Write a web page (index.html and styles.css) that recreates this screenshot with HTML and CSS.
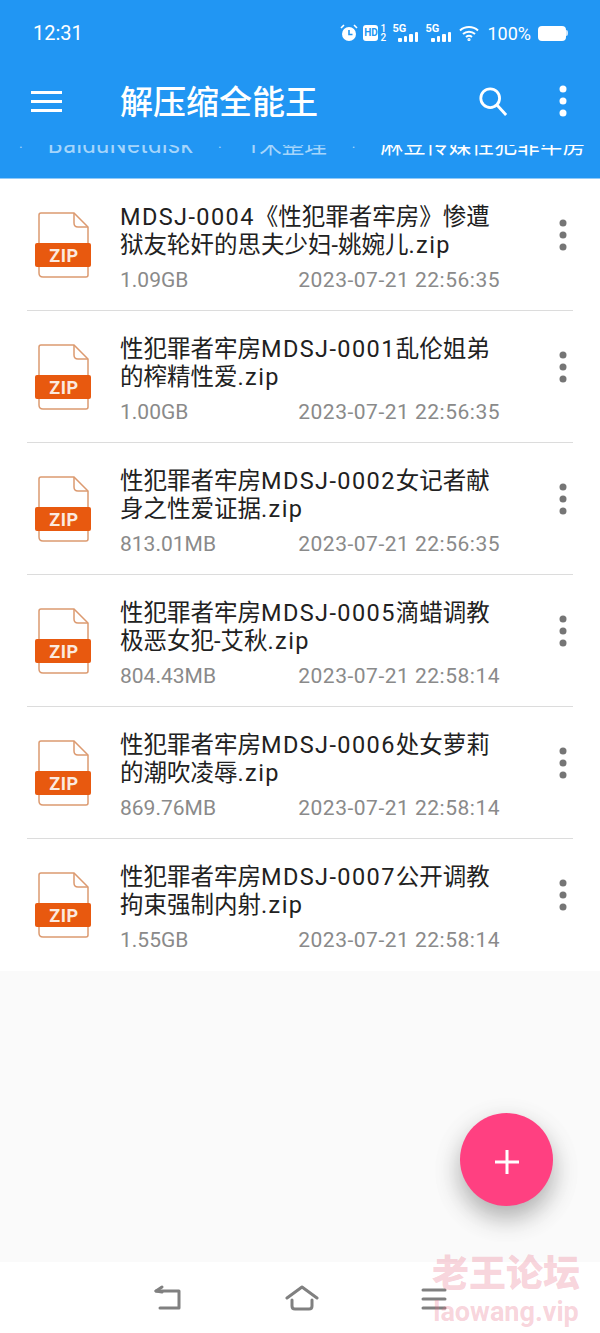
FILE: index.html
```html
<!DOCTYPE html>
<html lang="zh-CN">
<head>
    <meta charset="UTF-8">
    <meta name="viewport" content="width=device-width, initial-scale=1.0">
    <title>解压缩全能王</title>
    <link rel="stylesheet" href="styles.css">
</head>
<body>
    <svg class="defs" width="0" height="0">
        <symbol id="zip" viewBox="0 0 60 68">
            <path d="M5 32V4q0-2 2-2h33l14 14v16M54 56v8q0 2-2 2H9q-4 0-4-4v-6" fill="none" stroke="#dc9a70" stroke-width="1.5"/>
            <path d="M40 2v10q0 4 4 4h10" fill="none" stroke="#dc9a70" stroke-width="1.5"/>
            <rect x="1" y="32" width="56" height="24" rx="2" fill="#e8590f"/>
        </symbol>
        <symbol id="dots" viewBox="0 0 8 32">
            <circle cx="4" cy="4" r="3.500"/><circle cx="4" cy="16" r="3.500"/><circle cx="4" cy="28" r="3.500"/>
        </symbol>
    </svg>

    <div class="app">
        <header class="topbar">
            <div class="status">
                <span class="clock">12:31</span>
                <div class="status-icons">
                    <svg class="alarm" width="18" height="18" viewBox="0 0 18 18" fill="#fff"><circle cx="9" cy="10" r="7"/><path d="M1 4l3-3M17 4l-3-3" stroke="#fff" stroke-width="1.6"/><path d="M9 6v4.500h3.500" stroke="#2196f3" stroke-width="1.600" fill="none"/></svg>
                    <div class="hd"><span class="hd-box">HD</span><span class="hd-nums"><b>1</b><b>2</b></span></div>
                    <div class="sig"><span>5G</span><i class="b1"></i><i class="b2"></i><i class="b3"></i><i class="b4"></i></div>
                    <div class="sig"><span>5G</span><i class="b1"></i><i class="b2"></i><i class="b3"></i><i class="b4"></i></div>
                    <svg class="wifi" width="20" height="16" viewBox="0 0 20 16" fill="none" stroke="#fff" stroke-width="2"><path d="M1 5.500c5-4.600 13-4.600 18 0M4 9c3.300-3 8.700-3 12 0M7 12c1.700-1.400 4.300-1.400 6 0"/><circle cx="10" cy="14.500" r=".6"/></svg>
                    <span class="pct">100%</span>
                    <div class="battery"></div>
                </div>
            </div>
            <div class="toolbar">
                <div class="burger"><i></i><i></i><i></i></div>
                <h1>解压缩全能王</h1>
                <svg class="search" width="30" height="30" viewBox="0 0 32 32" fill="none" stroke="#fff" stroke-width="3"><circle cx="13" cy="13" r="10"/><path d="M20 20l10 11"/></svg>
                <svg class="more-top" width="8" height="32" fill="#fff"><use href="#dots"/></svg>
            </div>
            <div class="crumbs">
                <div class="crumbs-row">
                    <span class="sep">·</span><span class="crumb-latin">BaiduNetdisk</span>
                    <span class="sep">·</span><span>1未整理</span>
                    <span class="sep">·</span><span class="current">麻豆传媒性犯罪牢房</span>
                </div>
            </div>
        </header>

        <ul class="files">
            <li class="file">
                <div class="zip"><svg width="60" height="68"><use href="#zip"/></svg><span>ZIP</span></div>
                <div class="info">
                    <div class="name"><span class="latin">MDSJ-0004</span>《性犯罪者牢房》惨遭狱友轮奸的思夫少妇-姚婉儿<span class="latin">.zip</span></div>
                    <div class="meta"><span>1.09GB</span><span class="date">2023-07-21 22:56:35</span></div>
                </div>
                <svg class="more" width="8" height="32" fill="#757575"><use href="#dots"/></svg>
            </li>
            <li class="file">
                <div class="zip"><svg width="60" height="68"><use href="#zip"/></svg><span>ZIP</span></div>
                <div class="info">
                    <div class="name">性犯罪者牢房<span class="latin">MDSJ-0001</span>乱伦姐弟的榨精性爱<span class="latin">.zip</span></div>
                    <div class="meta"><span>1.00GB</span><span class="date">2023-07-21 22:56:35</span></div>
                </div>
                <svg class="more" width="8" height="32" fill="#757575"><use href="#dots"/></svg>
            </li>
            <li class="file">
                <div class="zip"><svg width="60" height="68"><use href="#zip"/></svg><span>ZIP</span></div>
                <div class="info">
                    <div class="name">性犯罪者牢房<span class="latin">MDSJ-0002</span>女记者献身之性爱证据<span class="latin">.zip</span></div>
                    <div class="meta"><span>813.01MB</span><span class="date">2023-07-21 22:56:35</span></div>
                </div>
                <svg class="more" width="8" height="32" fill="#757575"><use href="#dots"/></svg>
            </li>
            <li class="file">
                <div class="zip"><svg width="60" height="68"><use href="#zip"/></svg><span>ZIP</span></div>
                <div class="info">
                    <div class="name">性犯罪者牢房<span class="latin">MDSJ-0005</span>滴蜡调教极恶女犯-艾秋<span class="latin">.zip</span></div>
                    <div class="meta"><span>804.43MB</span><span class="date">2023-07-21 22:58:14</span></div>
                </div>
                <svg class="more" width="8" height="32" fill="#757575"><use href="#dots"/></svg>
            </li>
            <li class="file">
                <div class="zip"><svg width="60" height="68"><use href="#zip"/></svg><span>ZIP</span></div>
                <div class="info">
                    <div class="name">性犯罪者牢房<span class="latin">MDSJ-0006</span>处女萝莉的潮吹凌辱<span class="latin">.zip</span></div>
                    <div class="meta"><span>869.76MB</span><span class="date">2023-07-21 22:58:14</span></div>
                </div>
                <svg class="more" width="8" height="32" fill="#757575"><use href="#dots"/></svg>
            </li>
            <li class="file">
                <div class="zip"><svg width="60" height="68"><use href="#zip"/></svg><span>ZIP</span></div>
                <div class="info">
                    <div class="name">性犯罪者牢房<span class="latin">MDSJ-0007</span>公开调教拘束强制内射<span class="latin">.zip</span></div>
                    <div class="meta"><span>1.55GB</span><span class="date">2023-07-21 22:58:14</span></div>
                </div>
                <svg class="more" width="8" height="32" fill="#757575"><use href="#dots"/></svg>
            </li>
        </ul>

        <nav class="navbar">
            <svg width="30" height="26" viewBox="0 0 30 26" fill="none" stroke="#808080" stroke-width="3" stroke-linecap="round" stroke-linejoin="round"><path d="M3 6h23v17H7"/><path d="M9 2L3 6l6 1"/></svg>
            <svg width="34" height="26" viewBox="0 0 34 26" fill="none" stroke="#808080" stroke-width="3" stroke-linecap="round" stroke-linejoin="round"><path d="M2 13L17 2l15 11"/><path d="M7 15v6q0 3 3 3h14q3 0 3-3v-6"/></svg>
            <svg width="26" height="24" viewBox="0 0 26 24" fill="none" stroke="#808080" stroke-width="3" stroke-linecap="round"><path d="M2 4h22M2 13h22M2 22h22"/></svg>
        </nav>

        <button class="fab"><svg width="26" height="26" viewBox="0 0 26 26" stroke="#fff" stroke-width="3"><path d="M1 13h24M13 1v24"/></svg></button>
        <div class="watermark"><strong>老王论坛</strong><span>laowang.vip</span></div>
    </div>
</body>
</html>
```

FILE: styles.css
```css
* { box-sizing: border-box; }
html, body { margin: 0; padding: 0; }
body {
    font-family: Roboto, "Noto Sans CJK SC", sans-serif;
    background-color: #fafafa;
}
.defs { position: absolute; }
.app {
    position: relative;
    width: 600px;
    height: 1333px;
    display: flex;
    flex-direction: column;
    overflow: hidden;
}

.topbar {
    background-color: #2196f3;
    color: white;
    height: 179px;
    border-bottom: 1px solid #90caf9;
}
.status {
    height: 66px;
    display: flex;
    align-items: center;
    justify-content: space-between;
    padding: 0 33px;
}
.clock { font-size: 20px; }
.status-icons {
    display: flex;
    align-items: center;
    gap: 6px;
    margin-right: 1px;
}
.alarm { margin-right: -1px; }
.hd { display: flex; align-items: center; gap: 1px; margin-right: -2px; }
.hd-box {
    background: white;
    color: #2196f3;
    font-size: 10px;
    font-weight: 700;
    line-height: 14px;
    width: 15px;
    height: 16px;
    padding-top: 1px;
    border-radius: 3px;
    text-align: center;
}
.hd-nums { display: flex; flex-direction: column; width: 8px; text-align: center; }
.hd-nums b { font-size: 10px; font-weight: 500; line-height: 9px; }
.sig {
    position: relative;
    width: 26px;
    height: 18px;
    margin-left: 1px;
    display: flex;
    align-items: flex-end;
    justify-content: flex-end;
    gap: 2px;
}
.sig span {
    position: absolute;
    left: 0;
    top: -1px;
    font-size: 11px;
    font-weight: 700;
    line-height: 11px;
}
.sig i { width: 3.5px; background: white; border-radius: 1px; }
.sig .b1 { height: 4px; }
.sig .b2 { height: 6px; }
.sig .b3 { height: 8px; }
.sig .b4 { height: 10px; }
.wifi { margin-left: 2px; }
.pct { font-size: 18px; margin-left: 2px; margin-right: 1px; }
.battery {
    position: relative;
    width: 28px;
    height: 15px;
    background: white;
    border-radius: 4px;
}
.battery::after {
    content: "";
    position: absolute;
    right: -2px;
    top: 4px;
    width: 2px;
    height: 6px;
    background: #cfe6fb;
    border-radius: 0 2px 2px 0;
}

.toolbar {
    height: 70px;
    display: flex;
    align-items: center;
    padding: 0 33px 0 31px;
}
.burger {
    width: 31px;
    display: flex;
    flex-direction: column;
    gap: 6px;
}
.burger i { height: 3px; background: white; }
h1 {
    margin: -2px 0 0 58px;
    flex: 1;
    font-size: 33px;
    font-weight: 500;
}
.search { margin-right: 51px; }

/* the tab strip is cut to a thin band in the app itself */
.crumbs {
    height: 11px;
    margin-top: 9px;
    overflow: hidden;
}
.crumbs-row {
    display: flex;
    align-items: baseline;
    white-space: nowrap;
    font-size: 22.5px;
    line-height: 24px;
    color: #a5d5fb;
    margin-top: -12px;
    padding-left: 19px;
    gap: 25px;
}
.crumb-latin { font-size: 24px; letter-spacing: 0.25px; }
.crumbs-row .current { color: white; letter-spacing: 0.3px; }
.sep { font-size: 14px; }

.files {
    list-style: none;
    margin: 0;
    padding: 0;
    background: white;
}
.file {
    position: relative;
    height: 132px;
    display: flex;
    align-items: center;
    padding: 0 33px 0 34px;
}
.file + .file::before {
    content: "";
    position: absolute;
    top: -1px;
    left: 27px;
    right: 27px;
    height: 1px;
    background: #dcdcdc;
}
.zip { position: relative; width: 60px; height: 68px; }
.zip span {
    position: absolute;
    left: 2px;
    top: 33px;
    width: 56px;
    text-align: center;
    color: #fbe9df;
    font-size: 18px;
    font-weight: 700;
    letter-spacing: 0.5px;
    line-height: 24px;
}
.info { margin-left: 26px; width: 380px; padding-top: 6px; }
.name {
    font-size: 23.5px;
    line-height: 28px;
    color: #212121;
    width: 375px;
}
.latin { letter-spacing: 1.4px; }
.meta {
    display: flex;
    justify-content: space-between;
    margin-top: 7px;
    font-size: 21px;
    line-height: 28px;
    color: #8a8a8a;
}
.date { letter-spacing: 0.5px; }
.more { margin: 0 0 20px 59px; flex: none; }

.navbar {
    position: absolute;
    left: 0;
    right: 0;
    bottom: 0;
    height: 71px;
    background: white;
    display: flex;
    align-items: center;
    justify-content: center;
    gap: 102px;
}

.fab {
    position: absolute;
    left: 460px;
    top: 1113px;
    width: 93px;
    height: 93px;
    border: none;
    border-radius: 50%;
    background: #ff4081;
    padding: 8px 0 0;
    box-shadow: 0 12px 24px rgba(0, 0, 0, 0.28), 0 10px 40px rgba(0, 0, 0, 0.05);
}

.watermark {
    position: absolute;
    left: 426px;
    top: 1254px;
    width: 160px;
    text-align: center;
    color: rgba(233, 110, 135, 0.3);
    font-weight: 700;
}
.watermark strong { display: block; font-size: 37px; line-height: 42px; }
.watermark span { display: block; font-size: 27px; line-height: 32px; }
```
